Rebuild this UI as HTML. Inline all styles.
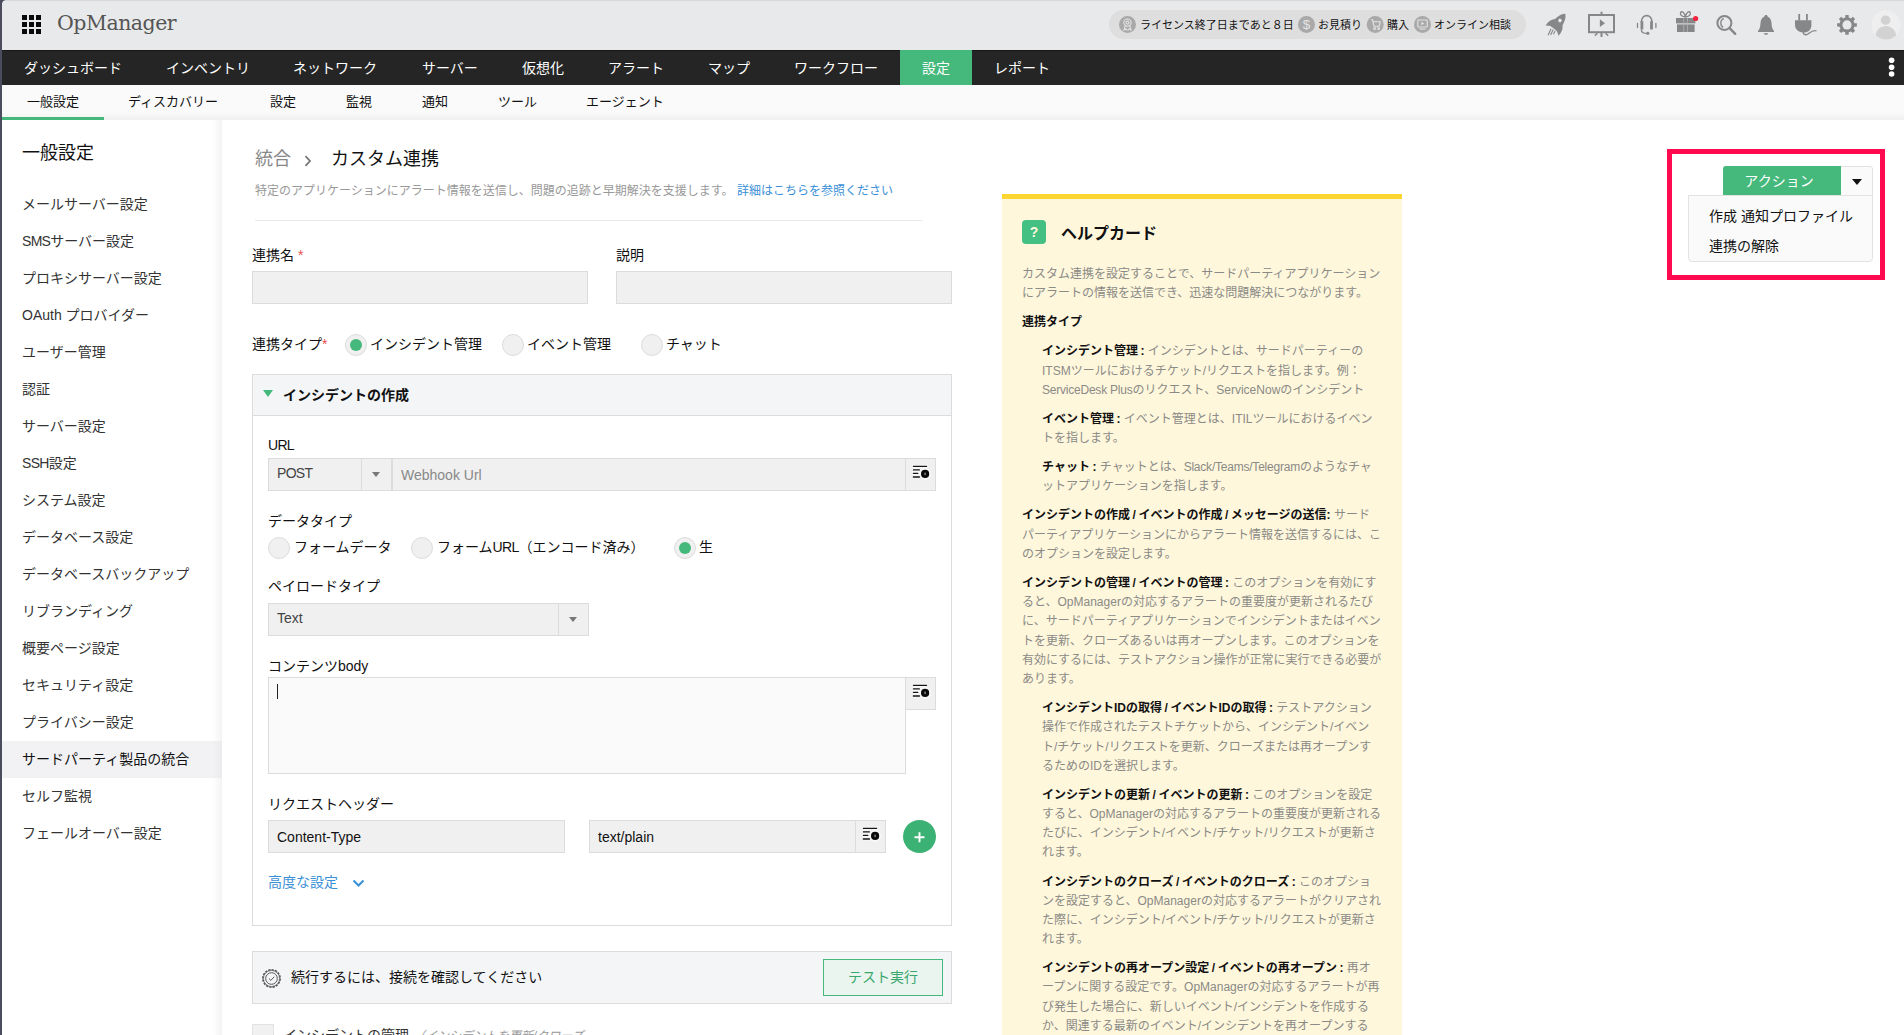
<!DOCTYPE html>
<html lang="ja">
<head>
<meta charset="utf-8">
<title>OpManager</title>
<style>
*{box-sizing:border-box;margin:0;padding:0}
html,body{width:1904px;height:1035px;overflow:hidden;background:#fff}
body{font-family:"Liberation Sans","Noto Sans CJK JP",sans-serif;font-size:14px;color:#111;position:relative}
.abs{position:absolute}
#lb{left:0;top:0;width:2px;height:1035px;background:#4b4d5e;z-index:50}
#hdr{left:0;top:0;width:1904px;height:50px;background:#e8e9ea;box-shadow:inset 0 1px 0 #d6d8da}
#logo{left:57px;top:10px;font-family:"DejaVu Serif","Liberation Serif",serif;font-size:20.5px;line-height:26px;color:#555;letter-spacing:-0.5px;font-weight:normal}
#nav{left:0;top:50px;width:1904px;height:35px;background:#252525;box-shadow:inset 0 1px 0 #171717;color:#fff;font-size:14px}
#nav span{position:absolute;top:0;line-height:36px;white-space:nowrap}
#nav .act{background:#45b97c;height:35px;text-align:center}
#sub{left:0;top:85px;width:1904px;height:35px;background:linear-gradient(#fafafa 0,#fafafa 27px,#f0f0f0 35px);font-size:13px;color:#111}
#sub span{position:absolute;top:0;line-height:33px;white-space:nowrap}
#side{left:2px;top:120px;width:220px;height:915px;background:linear-gradient(to right,#fff 0,#fff 211px,#f3f3f3 220px)}
#side h2{position:absolute;left:20px;top:21px;font-size:18px;font-weight:normal;line-height:24px;color:#111}
#side div{position:absolute;left:0;width:220px;height:37px;line-height:37px;padding-left:20px;font-size:14px;color:#333;white-space:nowrap}
#side div.on{background:linear-gradient(to right,#f2f2f4 0,#f2f2f4 211px,#ebebed 220px);color:#111}
.lbl{position:absolute;font-size:14px;line-height:20px;color:#111;white-space:nowrap}
.inp{position:absolute;background:#f0f0f0;border:1px solid #dcdcdc;height:33px;font-size:14px;line-height:31px;color:#111;padding-left:8px;white-space:nowrap}
.radio{position:absolute;width:22px;height:22px;border-radius:50%;background:#f0f0f0;border:1px solid #dcdcdc}
.radio.on::after{content:"";position:absolute;left:4px;top:4px;width:12px;height:12px;border-radius:50%;background:#45b97c}
.tri{position:absolute;width:0;height:0;border-left:4px solid transparent;border-right:4px solid transparent;border-top:5px solid #777}
.ibtn{position:absolute;background:#f0f0f0;border:1px solid #dcdcdc;width:31px;height:33px}

#pill{left:1109px;top:10px;width:417px;height:29px;border-radius:15px;background:#dedede}
#pill .pt{position:absolute;top:1px;line-height:29px;font-size:11px;color:#111;white-space:nowrap}

#help{left:1002px;top:194px;width:400px;height:842px;background:#fff7dc;border-top:5px solid #fdd530}
#hb{position:absolute;left:20px;top:66px;width:372px;font-size:12px;line-height:19.2px;color:#8a8a86}
#hb p{margin:0 0 9.9px 0;white-space:nowrap}
#hb p.in{margin-left:20px}
#hb b{color:#111;font-weight:bold;word-spacing:-0.8px}
.u{letter-spacing:-0.7px}
.n{letter-spacing:-0.22px}
</style>
</head>
<body>
<div id="hdr" class="abs">
<svg class="abs" style="left:22px;top:15px" width="19" height="19" viewBox="0 0 19 19"><g fill="#0a0a0a"><rect x="0" y="0" width="5" height="5"/><rect x="7" y="0" width="5" height="5"/><rect x="14" y="0" width="5" height="5"/><rect x="0" y="7" width="5" height="5"/><rect x="7" y="7" width="5" height="5"/><rect x="14" y="7" width="5" height="5"/><rect x="0" y="14" width="5" height="5"/><rect x="7" y="14" width="5" height="5"/><rect x="14" y="14" width="5" height="5"/></g></svg>

<div id="logo" class="abs">OpManager</div>
<div id="pill" class="abs">
<span class="pt" style="left:31px">ライセンス終了日まであと８日</span>
<span class="pt" style="left:209px">お見積り</span>
<span class="pt" style="left:278px">購入</span>
<span class="pt" style="left:325px">オンライン相談</span>
</div>
<svg class="abs" style="left:0;top:0" width="1904" height="50" viewBox="0 0 1904 50">
<!-- pill icons -->
<g fill="#a9a9a9"><circle cx="1127.5" cy="24.4" r="8.5"/><circle cx="1306.5" cy="24.4" r="8.5"/><circle cx="1375.2" cy="24.4" r="8.5"/><circle cx="1422.5" cy="24.4" r="8.5"/></g>
<g fill="none" stroke="#e4e4e4" stroke-width="1.1">
<circle cx="1127.5" cy="22.6" r="3.6"/><circle cx="1127.5" cy="22.6" r="1.5"/><path d="M1125.2 25.6 L1124 30 L1126 29 L1127.3 30.4 M1129.8 25.6 L1131 30 L1129 29 L1127.7 30.4"/>
<path d="M1371 19.8 H1372.6 L1374 26.2 H1379.2 L1380.2 21.8 H1373.2"/><circle cx="1374.6" cy="28.6" r="0.9"/><circle cx="1378.6" cy="28.6" r="0.9"/>
<rect x="1417.8" y="20" width="9.4" height="7" rx="0.8"/><path d="M1419.5 29 H1425.5"/><path d="M1421.4 21.8 V25.2 L1424.2 23.5 Z" fill="#e4e4e4" stroke="none"/>
</g>
<text x="1306.5" y="29.3" font-family="Liberation Sans, sans-serif" font-size="13.5" fill="#e4e4e4" text-anchor="middle">$</text>
<!-- rocket -->
<g transform="translate(1557.4 23.8) rotate(38)" fill="#858789">
<path d="M0 -12.8 C4.6 -9 5.8 -1 4.2 6 L-4.2 6 C-5.8 -1 -4.6 -9 0 -12.8 Z"/>
<path d="M-4.4 -2.5 C-7.5 0 -8.8 4 -8.2 8.6 L-3.4 5.6 Z M4.4 -2.5 C7.5 0 8.8 4 8.2 8.6 L3.4 5.6 Z"/>
<circle cx="0" cy="-4.2" r="1.8" fill="#e8e9ea"/>
</g>
<path d="M1551 28.8 L1548.1 35.2 M1553.2 29.6 L1550.6 34.9 M1555.3 30.8 L1553.4 34.2" stroke="#858789" stroke-width="1.1" fill="none"/>
<!-- presentation -->
<g fill="none" stroke="#858789" stroke-width="2"><rect x="1589" y="15" width="25" height="17.2"/><path d="M1601.5 11.8 V15 M1601.5 33 V37"/><path d="M1597.5 33.2 L1594.8 35.6 M1605.5 33.2 L1608.2 35.6" stroke-width="1.5"/></g>
<path d="M1599.9 19.3 V27 L1605 23.15 Z" fill="#858789"/>
<!-- headset -->
<g fill="none" stroke="#858789">
<path d="M1641.4 22.5 C1641.4 13.4 1652 13.4 1652 22.5" stroke-width="1.7"/>
<path d="M1641.9 21.2 V29.6 M1651.5 21.2 V29.6" stroke-width="2.8"/>
<path d="M1637.5 23.4 V27.6 M1655.9 23.4 V27.6" stroke-width="1.3" stroke-linecap="round"/>
<path d="M1641.3 29.4 C1641.3 32.2 1643.6 33.4 1647 33.4" stroke-width="1.3"/>
</g>
<circle cx="1647.8" cy="33.3" r="1.6" fill="#858789"/>
<!-- gift -->
<g fill="#858789"><rect x="1676" y="18" width="19.4" height="5.4"/><rect x="1677" y="24.4" width="17.6" height="7.6"/></g>
<g fill="none" stroke="#b5b6b7" stroke-width="0.7"><path d="M1683.7 18 V32 M1687.5 18 V32"/></g>
<g fill="none" stroke="#858789" stroke-width="1.3"><path d="M1685.4 17 C1682 16.5 1679.6 14.8 1680.6 12.6 C1681.8 10.4 1684.6 12.6 1685.4 17 C1686.2 12.6 1689 10.4 1690.2 12.6 C1691.2 14.8 1688.8 16.5 1685.4 17"/></g>
<circle cx="1695.6" cy="18.5" r="2.6" fill="#f5253f"/>
<!-- search -->
<g fill="none" stroke="#858789"><circle cx="1724.4" cy="22.9" r="7" stroke-width="2"/><path d="M1729.6 28.2 L1735.2 33.8" stroke-width="2.4" stroke-linecap="round"/><path d="M1723.8 18.4 C1719.8 20.2 1720 25.8 1723.2 27.4" stroke-width="1.3"/></g>
<!-- bell -->
<path d="M1766 15 C1767 15 1767.6 15.6 1767.6 16.6 C1770.6 17.8 1771.4 20.6 1771.6 24 C1771.8 27.6 1772.6 29.6 1774 31 V32 H1758 V31 C1759.4 29.6 1760.2 27.6 1760.4 24 C1760.6 20.6 1761.4 17.8 1764.4 16.6 C1764.4 15.6 1765 15 1766 15 Z M1763.8 33.2 H1768.2 C1768.2 35.4 1763.8 35.4 1763.8 33.2 Z" fill="#858789"/>
<!-- plug -->
<g fill="#858789"><rect x="1798.3" y="14" width="1.8" height="6.6"/><rect x="1806" y="14" width="1.8" height="6.6"/>
<path d="M1795 20.3 H1811.4 V25 C1811.4 29.4 1808.6 32.2 1804.6 32.6 L1803 32.6 C1798.6 32.2 1795 29.4 1795 25 Z"/></g>
<path d="M1803.2 32 C1803.4 35.6 1806.6 35.4 1809.4 33 C1812 30.8 1814.4 30 1816.6 31" fill="none" stroke="#858789" stroke-width="1.3"/>
<!-- gear -->
<path d="M1854.39 23.13 L1856.86 23.26 L1856.86 26.54 L1854.39 26.67 L1853.48 28.87 L1855.14 30.71 L1852.81 33.04 L1850.97 31.38 L1848.77 32.29 L1848.64 34.76 L1845.36 34.76 L1845.23 32.29 L1843.03 31.38 L1841.19 33.04 L1838.86 30.71 L1840.52 28.87 L1839.61 26.67 L1837.14 26.54 L1837.14 23.26 L1839.61 23.13 L1840.52 20.93 L1838.86 19.09 L1841.19 16.76 L1843.03 18.42 L1845.23 17.51 L1845.36 15.04 L1848.64 15.04 L1848.77 17.51 L1850.97 18.42 L1852.81 16.76 L1855.14 19.09 L1853.48 20.93 Z" fill="#858789"/><circle cx="1847" cy="24.9" r="4.6" fill="#e8e9ea"/>
<!-- avatar -->
<circle cx="1886" cy="25" r="14.6" fill="#efefef"/>
<clipPath id="avc"><circle cx="1886" cy="25" r="14.6"/></clipPath>
<g clip-path="url(#avc)" fill="#d2d2d2"><circle cx="1885.6" cy="20.2" r="4.8"/><ellipse cx="1885.8" cy="35.5" rx="10.2" ry="9.6"/></g>
</svg>
</div>
<div id="nav" class="abs"><span style="left:24px">ダッシュボード</span><span style="left:166px">インベントリ</span><span style="left:293px">ネットワーク</span><span style="left:422px">サーバー</span><span style="left:522px">仮想化</span><span style="left:608px">アラート</span><span style="left:708px">マップ</span><span style="left:794px">ワークフロー</span><span style="left:994px">レポート</span><span class="act" style="left:900px;width:72px">設定</span><svg class="abs" style="left:1886px;top:5px" width="12" height="26" viewBox="0 0 12 26"><circle cx="5.6" cy="5.3" r="2.8" fill="#fff"/><circle cx="5.6" cy="12.2" r="2.8" fill="#fff"/><circle cx="5.6" cy="19" r="2.8" fill="#fff"/></svg></div>
<div id="sub" class="abs"><span style="left:27px">一般設定</span><span style="left:128px">ディスカバリー</span><span style="left:270px">設定</span><span style="left:346px">監視</span><span style="left:422px">通知</span><span style="left:498px">ツール</span><span style="left:586px">エージェント</span><i class="abs" style="left:2px;top:32px;width:102px;height:3px;background:#45b97c"></i></div>
<div id="side" class="abs"><h2>一般設定</h2><div style="top:66px">メールサーバー設定</div><div style="top:103px"><span class="u">SMS</span>サーバー設定</div><div style="top:140px">プロキシサーバー設定</div><div style="top:177px">OAuth プロバイダー</div><div style="top:214px">ユーザー管理</div><div style="top:251px">認証</div><div style="top:288px">サーバー設定</div><div style="top:325px"><span class="u">SSH</span>設定</div><div style="top:362px">システム設定</div><div style="top:399px">データベース設定</div><div style="top:436px">データベースバックアップ</div><div style="top:473px">リブランディング</div><div style="top:510px">概要ページ設定</div><div style="top:547px">セキュリティ設定</div><div style="top:584px">プライバシー設定</div><div class="on" style="top:621px">サードパーティ製品の統合</div><div style="top:658px">セルフ監視</div><div style="top:695px">フェールオーバー設定</div></div>
<div id="main">
<div class="abs" style="left:255px;top:146px;font-size:18px;line-height:26px;color:#888;white-space:nowrap">統合</div>
<svg class="abs" style="left:304px;top:155px" width="8" height="12" viewBox="0 0 8 12"><path d="M1.5 1.2 L6 6 L1.5 10.8" fill="none" stroke="#777" stroke-width="1.8"/></svg>
<div class="abs" style="left:331px;top:146px;font-size:18px;line-height:26px;color:#111;white-space:nowrap">カスタム連携</div>
<div class="abs" style="left:255px;top:182px;font-size:12px;line-height:18px;color:#999;white-space:nowrap">特定のアプリケーションにアラート情報を送信し、問題の追跡と早期解決を支援します。 <span style="color:#3a8fd6">詳細はこちらを参照ください</span></div>
<div class="abs" style="left:255px;top:220px;width:667px;height:1px;background:#e8e8e8"></div>

<div class="lbl" style="left:252px;top:245px">連携名 <span style="color:#e8504f;font-size:14px">*</span></div>
<div class="lbl" style="left:616px;top:245px">説明</div>
<div class="inp" style="left:252px;top:271px;width:336px"></div>
<div class="inp" style="left:616px;top:271px;width:336px"></div>

<div class="lbl" style="left:252px;top:334px">連携タイプ<span style="color:#e8504f;font-size:14px">*</span></div>
<div class="radio on" style="left:345px;top:334px"></div><div class="lbl" style="left:370px;top:334px">インシデント管理</div>
<div class="radio" style="left:502px;top:334px"></div><div class="lbl" style="left:527px;top:334px">イベント管理</div>
<div class="radio" style="left:641px;top:334px"></div><div class="lbl" style="left:666px;top:334px">チャット</div>

<div class="abs" style="left:252px;top:374px;width:700px;height:552px;border:1px solid #dcdcdc;background:#fff"></div>
<div class="abs" style="left:252px;top:374px;width:700px;height:42px;border:1px solid #dcdcdc;background:#f4f5f7"></div>
<div class="abs" style="left:263px;top:390px;width:0;height:0;border-left:5px solid transparent;border-right:5px solid transparent;border-top:7px solid #45b97c"></div>
<div class="lbl" style="left:283px;top:385px;font-weight:bold">インシデントの作成</div>

<div class="lbl" style="left:268px;top:435px"><span class="u">URL</span></div>
<div class="inp" style="left:268px;top:458px;width:124px;color:#444;line-height:29px"><span class="u">POST</span></div>
<div class="abs" style="left:361px;top:459px;width:1px;height:31px;background:#dcdcdc"></div>
<div class="tri" style="left:372px;top:472px"></div>
<div class="inp" style="left:392px;top:458px;width:514px;color:#888;line-height:33px">Webhook Url</div>
<div class="ibtn" style="left:905px;top:458px"><svg width="31" height="33" viewBox="0 0 31 33" style="position:absolute;left:-1px;top:-1px"><g stroke="#fbfbfb" stroke-width="3.2" stroke-linecap="round" fill="none" opacity=".8"><path d="M8.4 8.4 H21.6 M8.4 11.9 H14.4 M8.4 15.4 H12.8 M8.4 19 H14.4"/><circle cx="20.1" cy="15.9" r="4.4"/></g><g stroke="#151515" stroke-linecap="round" fill="none"><path d="M8.4 8.4 H21.6" stroke-width="1.2"/><path d="M8.4 11.9 H14.4 M8.4 15.4 H12.8" stroke-width="1.2"/><path d="M8.4 19 H14.4" stroke-width="1.6"/></g><circle cx="20.1" cy="15.9" r="4.1" fill="#0a0a0a"/><ellipse cx="20.1" cy="15.9" rx="0.8" ry="1.4" fill="#8a8a8a"/></svg></div>

<div class="lbl" style="left:268px;top:511px">データタイプ</div>
<div class="radio" style="left:268px;top:537px"></div><div class="lbl" style="left:294px;top:537px">フォームデータ</div>
<div class="radio" style="left:411px;top:537px"></div><div class="lbl" style="left:437px;top:537px">フォーム<span class="u">URL</span>（エンコード済み）</div>
<div class="radio on" style="left:674px;top:537px"></div><div class="lbl" style="left:699px;top:537px">生</div>

<div class="lbl" style="left:268px;top:576px">ペイロードタイプ</div>
<div class="inp" style="left:268px;top:603px;width:321px;color:#444;line-height:29px">Text</div>
<div class="abs" style="left:558px;top:604px;width:1px;height:31px;background:#dcdcdc"></div>
<div class="tri" style="left:569px;top:617px"></div>

<div class="lbl" style="left:268px;top:656px">コンテンツbody</div>
<div class="abs" style="left:268px;top:677px;width:638px;height:97px;border:1px solid #dcdcdc;background:#fafafa"></div>
<div class="abs" style="left:277px;top:684px;width:1px;height:15px;background:#222"></div>
<div class="ibtn" style="left:905px;top:677px"><svg width="31" height="33" viewBox="0 0 31 33" style="position:absolute;left:-1px;top:-1px"><g stroke="#fbfbfb" stroke-width="3.2" stroke-linecap="round" fill="none" opacity=".8"><path d="M8.4 8.4 H21.6 M8.4 11.9 H14.4 M8.4 15.4 H12.8 M8.4 19 H14.4"/><circle cx="20.1" cy="15.9" r="4.4"/></g><g stroke="#151515" stroke-linecap="round" fill="none"><path d="M8.4 8.4 H21.6" stroke-width="1.2"/><path d="M8.4 11.9 H14.4 M8.4 15.4 H12.8" stroke-width="1.2"/><path d="M8.4 19 H14.4" stroke-width="1.6"/></g><circle cx="20.1" cy="15.9" r="4.1" fill="#0a0a0a"/><ellipse cx="20.1" cy="15.9" rx="0.8" ry="1.4" fill="#8a8a8a"/></svg></div>

<div class="lbl" style="left:268px;top:794px">リクエストヘッダー</div>
<div class="inp" style="left:268px;top:820px;width:297px;line-height:33px">Content-Type</div>
<div class="inp" style="left:589px;top:820px;width:267px;line-height:33px">text/plain</div>
<div class="ibtn" style="left:855px;top:820px"><svg width="31" height="33" viewBox="0 0 31 33" style="position:absolute;left:-1px;top:-1px"><g stroke="#fbfbfb" stroke-width="3.2" stroke-linecap="round" fill="none" opacity=".8"><path d="M8.4 8.4 H21.6 M8.4 11.9 H14.4 M8.4 15.4 H12.8 M8.4 19 H14.4"/><circle cx="20.1" cy="15.9" r="4.4"/></g><g stroke="#151515" stroke-linecap="round" fill="none"><path d="M8.4 8.4 H21.6" stroke-width="1.2"/><path d="M8.4 11.9 H14.4 M8.4 15.4 H12.8" stroke-width="1.2"/><path d="M8.4 19 H14.4" stroke-width="1.6"/></g><circle cx="20.1" cy="15.9" r="4.1" fill="#0a0a0a"/><ellipse cx="20.1" cy="15.9" rx="0.8" ry="1.4" fill="#8a8a8a"/></svg></div>
<div class="abs" style="left:903px;top:820px;width:33px;height:33px;border-radius:50%;background:#3bb273"></div>
<svg class="abs" style="left:903px;top:820px" width="33" height="33" viewBox="0 0 33 33"><path d="M11.5 17.3 H21.5 M16.5 12.3 V22.3" stroke="#fff" stroke-width="1.9" fill="none"/></svg>

<div class="lbl" style="left:268px;top:872px;color:#3a8fd6">高度な設定</div>
<svg class="abs" style="left:351.6px;top:879px" width="13" height="9" viewBox="0 0 13 9"><path d="M1.5 1.5 L6.5 6.5 L11.5 1.5" fill="none" stroke="#3a8fd6" stroke-width="2"/></svg>

<div class="abs" style="left:252px;top:951px;width:700px;height:53px;border:1px solid #dcdcdc;background:#f4f5f7"></div>
<svg class="abs" style="left:260.5px;top:967.5px" width="21" height="21" viewBox="0 0 21 21"><circle cx="10.5" cy="10.5" r="8.7" fill="none" stroke="#555" stroke-width="1.5" stroke-dasharray="2.3 1.1"/><circle cx="10.5" cy="10.5" r="8.1" fill="none" stroke="#666" stroke-width="0.9"/><circle cx="10.5" cy="10.5" r="5.8" fill="none" stroke="#555" stroke-width="1"/><path d="M8 10.6 L9.9 12.4 L13.2 8.8" fill="none" stroke="#555" stroke-width="1"/></svg>
<div class="lbl" style="left:291px;top:967px">続行するには、接続を確認してください</div>
<div class="abs" style="left:823px;top:959px;width:120px;height:37px;border:1px solid #45b97c;background:#e9f5ee;color:#3aa76d;font-size:14px;line-height:35px;text-align:center">テスト実行</div>

<div class="abs" style="left:252px;top:1024px;width:22px;height:22px;border:1px solid #e2e2e2;background:#f1f1f1"></div>
<div class="lbl" style="left:283px;top:1025px;color:#333">インシデントの管理 <span style="color:#999;font-size:12px;font-style:italic">（インシデントを更新/クローズ</span></div>
</div>
<div id="help" class="abs">
<div class="abs" style="left:20px;top:21px;width:24px;height:24px;border-radius:4px;background:#45c083;color:#fff7dc;font-weight:bold;font-size:14px;line-height:25px;text-align:center">?</div>
<div class="abs" style="left:59px;top:23px;font-size:16px;font-weight:bold;line-height:24px;color:#111;white-space:nowrap">ヘルプカード</div>
<div id="hb">
<p>カスタム連携を設定することで、サードパーティアプリケーション<br>にアラートの情報を送信でき、迅速な問題解決につながります。</p>
<p><b>連携タイプ</b></p>
<p class="in"><b>インシデント管理 :</b> インシデントとは、サードパーティーの<br>ITSMツールにおけるチケット/リクエストを指します。例：<br><span class="n">ServiceDesk Plus</span>のリクエスト、ServiceNowのインシデント</p>
<p class="in"><b>イベント管理 :</b> イベント管理とは、ITILツールにおけるイベン<br>トを指します。</p>
<p class="in"><b>チャット :</b> チャットとは、<span class="n">Slack/Teams/Telegram</span>のようなチャ<br>ットアプリケーションを指します。</p>
<p><b>インシデントの作成 / イベントの作成 / メッセージの送信:</b> サード<br>パーティアプリケーションにからアラート情報を送信するには、こ<br>のオプションを設定します。</p>
<p><b>インシデントの管理 / イベントの管理 :</b> このオプションを有効にす<br>ると、OpManagerの対応するアラートの重要度が更新されるたび<br>に、サードパーティアプリケーションでインシデントまたはイベン<br>トを更新、クローズあるいは再オープンします。このオプションを<br>有効にするには、テストアクション操作が正常に実行できる必要が<br>あります。</p>
<p class="in"><b>インシデントIDの取得 / イベントIDの取得 :</b> テストアクション<br>操作で作成されたテストチケットから、インシデント/イベン<br>ト/チケット/リクエストを更新、クローズまたは再オープンす<br>るためのIDを選択します。</p>
<p class="in"><b>インシデントの更新 / イベントの更新 :</b> このオプションを設定<br>すると、OpManagerの対応するアラートの重要度が更新される<br>たびに、インシデント/イベント/チケット/リクエストが更新さ<br>れます。</p>
<p class="in"><b>インシデントのクローズ / イベントのクローズ :</b> このオプショ<br>ンを設定すると、OpManagerの対応するアラートがクリアされ<br>た際に、インシデント/イベント/チケット/リクエストが更新さ<br>れます。</p>
<p class="in"><b>インシデントの再オープン設定 / イベントの再オープン :</b> 再オ<br>ープンに関する設定です。OpManagerの対応するアラートが再<br>び発生した場合に、新しいイベント/インシデントを作成する<br>か、関連する最新のイベント/インシデントを再オープンする</p>
</div>
</div>
<div id="action">
<div class="abs" style="left:1667px;top:149px;width:218px;height:131px;border:5px solid #ff0a4e"></div>
<div class="abs" style="left:1723px;top:166px;width:150px;height:30px;border-radius:3px 3px 0 0;background:#fafafa;border:1px solid #e2e2e2"></div>
<div class="abs" style="left:1723px;top:166px;width:118px;height:29px;border-radius:3px 0 0 0;background:#45b97c;color:#fff;font-size:14px;line-height:31px;text-align:center;padding-right:6px">アクション</div>
<div class="abs" style="left:1852px;top:178.5px;width:0;height:0;border-left:5px solid transparent;border-right:5px solid transparent;border-top:6px solid #111"></div>
<div class="abs" style="left:1688px;top:195px;width:185px;height:67px;border:1px solid #e2e2e2;border-radius:0 0 4px 4px;background:#fafafa"></div>
<div class="lbl" style="left:1709px;top:206px">作成 通知プロファイル</div>
<div class="lbl" style="left:1709px;top:236px">連携の解除</div>
</div>
<div id="lb" class="abs"></div>
<div class="abs" style="left:2px;top:0;width:3px;height:3px;z-index:51;background:radial-gradient(circle at 100% 100%,rgba(75,77,94,0) 2.2px,#4b4d5e 3px)"></div>
</body>
</html>
